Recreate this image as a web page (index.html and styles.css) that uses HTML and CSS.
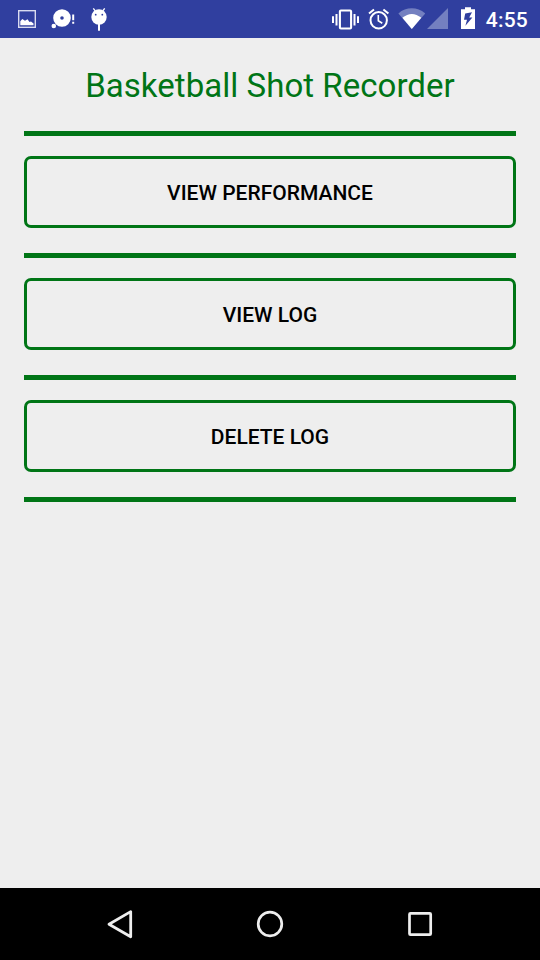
FILE: index.html
```
<!DOCTYPE html>
<html lang="en">
<head>
<meta charset="utf-8">
<title>Basketball Shot Recorder</title>
<link rel="stylesheet" href="styles.css">
</head>
<body>
<header class="status-bar">
  <div class="notifications">
    <svg width="18" height="38" viewBox="18 0 18 38"><rect x="18.7" y="10.7" width="16.600" height="16.600" fill="none" stroke="#d9dcf0" stroke-width="1.400"/><path d="M20.300 25.300V21.300l2-2.300 2.700 1.800 2.500-1.600 2 2.700 1.500-.5 2.500 2v1.900z" fill="#fff"/></svg>
    <svg width="24" height="38" viewBox="51 0 24 38" fill="#fff"><path fill-rule="evenodd" d="M62 9.200a8.800 8.800 0 1 1 0 17.600a8.800 8.800 0 0 1 0-17.600zM62 16.200a1.800 1.800 0 1 0 0 3.600a1.800 1.800 0 0 0 0-3.600z"/><circle cx="53.800" cy="26" r="2.300"/><path d="M72.200 14.500h2v5.700h-2zM72.200 21.700h2v2h-2z"/></svg>
    <svg width="16" height="38" viewBox="91 0 16 38"><path d="M95.300 11l-2-2.600M102.700 11l2-2.600" stroke="#fff" stroke-width="1.300"/><circle cx="99" cy="17" r="7.700" fill="#fff"/><path d="M98 24h2v6.800h-2z" fill="#fff"/><circle cx="95.700" cy="14.700" r=".9" fill="#303f9f"/><circle cx="102.300" cy="14.700" r=".9" fill="#303f9f"/></svg>
  </div>
  <div class="system">
    <svg width="27" height="38" viewBox="332 0 27 38" fill="none" stroke="#fff"><rect x="339.900" y="10.500" width="11.200" height="18" rx="1" stroke-width="2.100"/><path d="M336.500 14v11.500M354.500 14v11.500M333 16.300v6.600M358 16.300v6.600" stroke-width="2"/></svg>
    <svg class="alarm" width="22" height="38" viewBox="368 0 22 38" fill="none" stroke="#fff" stroke-width="2"><circle cx="378.700" cy="20.300" r="8.200"/><path d="M369 13.600l5-4.200M388.400 13.600l-5-4.200"/><path d="M378.300 15v5.800l4 2.400" stroke-width="1.600"/></svg>
    <svg class="wifi" width="27" height="38" viewBox="398 0 27 38"><path d="M398.400 13.400C406 6.600 417.600 6.600 425.200 13.400L411.800 29z" fill="#7480c0"/><path d="M402.400 17.700Q411.800 10.100 421.300 17.700L411.800 29z" fill="#fff"/></svg>
    <svg class="signal" width="21" height="38" viewBox="427 0 21 38"><path d="M448 8v21h-21z" fill="#7480c0"/></svg>
    <svg class="battery" width="14" height="38" viewBox="461 0 14 38"><path d="M461 9.200h4V7.200h6v2h4V29h-14z" fill="#fff"/><path d="M472 12.300l-6.800 1.200-1.200 6.300h3l-1.600 6 7-8.300h-3.200z" fill="#303f9f"/></svg>
    <span class="clock">4:55</span>
  </div>
</header>
<main class="content">
  <h1 class="title">Basketball Shot Recorder</h1>
  <hr class="divider">
  <button class="action">VIEW PERFORMANCE</button>
  <hr class="divider">
  <button class="action">VIEW LOG</button>
  <hr class="divider">
  <button class="action">DELETE LOG</button>
  <hr class="divider">
</main>
<nav class="nav-bar">
  <svg width="30" height="36" viewBox="105 906 30 36"><path d="M130.700 911.600v25.200l-21.700-12.600z" fill="none" stroke="#eee" stroke-width="2.800" stroke-linejoin="round"/></svg>
  <svg width="30" height="36" viewBox="255 906 30 36"><circle cx="270" cy="924" r="11.800" fill="none" stroke="#eee" stroke-width="2.700"/></svg>
  <svg width="30" height="36" viewBox="405 906 30 36"><rect x="409.500" y="913.300" width="21.200" height="21.400" rx="1" fill="none" stroke="#eee" stroke-width="2.700"/></svg>
</nav>
</body>
</html>
```
FILE: styles.css
```
* {
  box-sizing: border-box;
}

body {
  margin: 0;
  height: 960px;
  display: flex;
  flex-direction: column;
  background: #eee;
  font-family: Roboto, "Liberation Sans", sans-serif;
}

svg {
  display: block;
  flex: none;
}

.status-bar {
  height: 38px;
  padding: 0 12px 0 18px;
  display: flex;
  justify-content: space-between;
  background: #303f9f;
  color: #fff;
}

.notifications {
  display: flex;
  gap: 15px;
}

.notifications svg:last-child {
  margin-left: 1px;
}

.system {
  display: flex;
}

.alarm {
  margin-left: 9px;
}

.wifi {
  margin-left: 8px;
}

.signal {
  margin-left: 2px;
}

.battery {
  margin-left: 13px;
}

.clock {
  width: 43px;
  margin-left: 10px;
  font-size: 21px;
  font-weight: 500;
  letter-spacing: 0.2px;
  line-height: 41px;
  text-align: right;
}

.content {
  flex: 1;
  padding: 0 24px;
}

.title {
  margin: 0;
  height: 93px;
  color: #007516;
  font-size: 33px;
  font-weight: 400;
  letter-spacing: 0.04px;
  line-height: 95px;
  text-align: center;
  white-space: nowrap;
}

.divider {
  height: 5px;
  margin: 0;
  border: 0;
  background: #007516;
}

.action {
  display: block;
  width: 100%;
  height: 72px;
  margin: 20px 0 25px;
  padding: 2px 0 0;
  border: 3px solid #007516;
  border-radius: 7px;
  background: transparent;
  color: #000;
  font-family: inherit;
  font-size: 21px;
  font-weight: 500;
}

.nav-bar {
  height: 72px;
  padding: 0 105px;
  display: flex;
  align-items: center;
  justify-content: space-between;
  background: #000;
}
```
